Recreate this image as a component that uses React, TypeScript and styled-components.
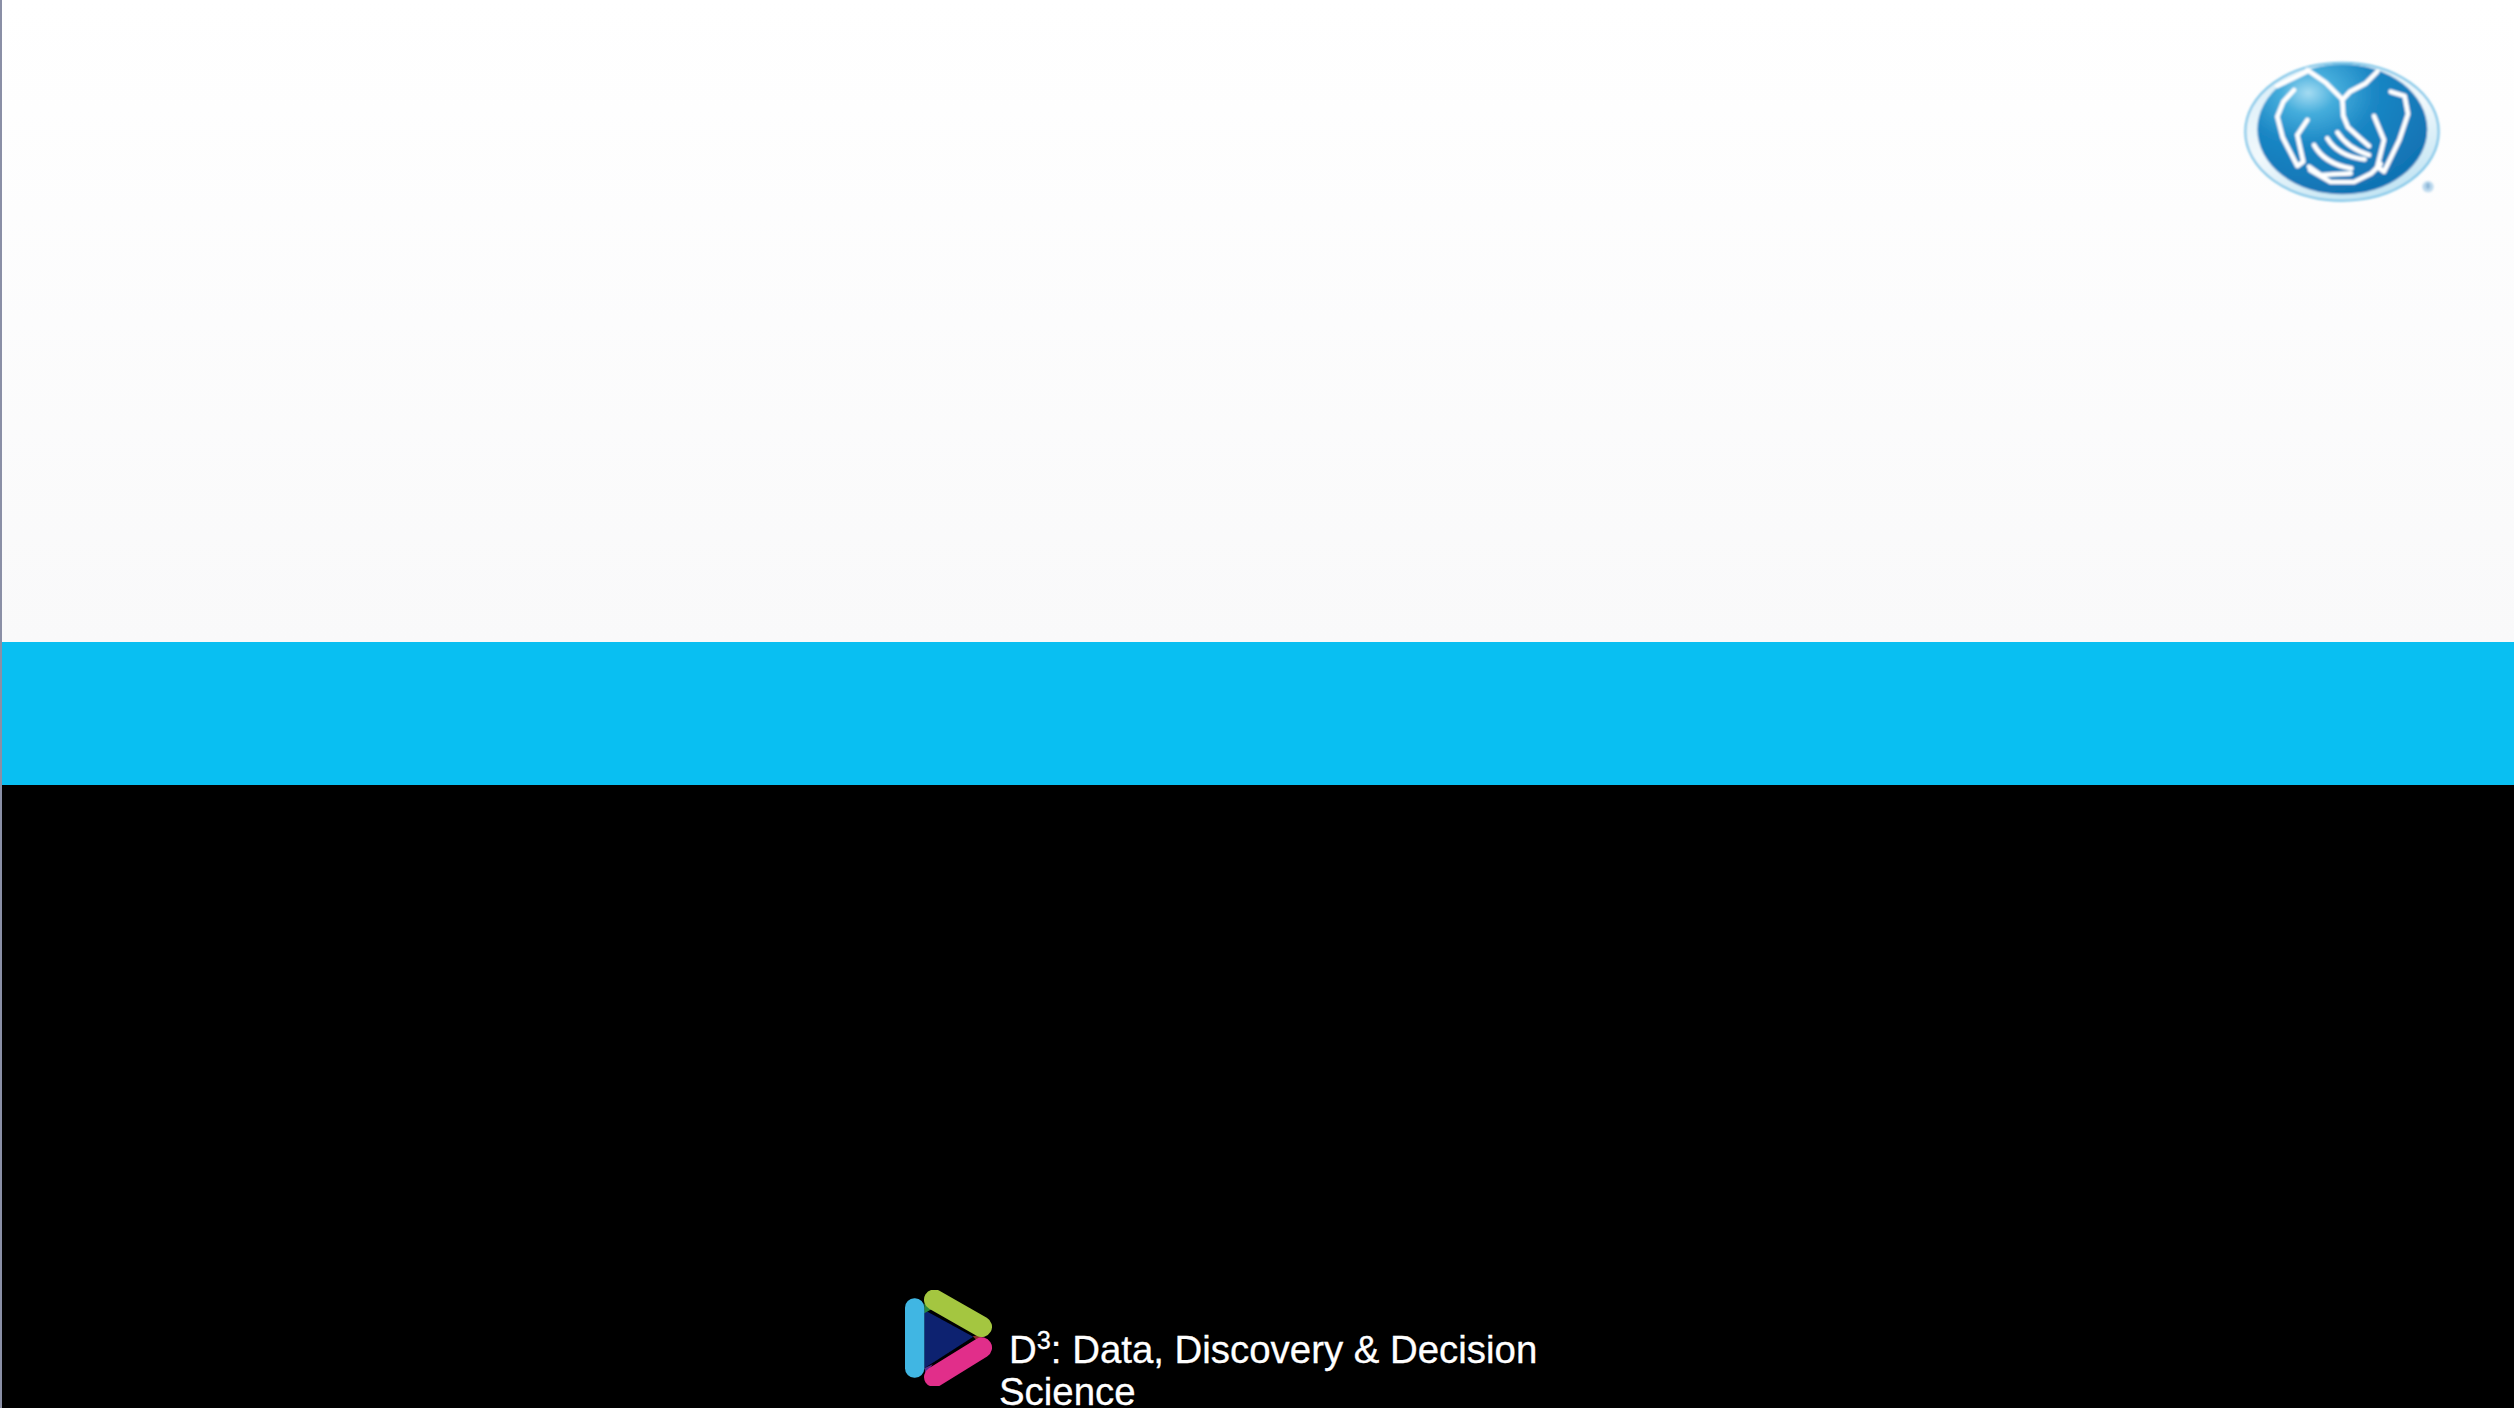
import styled, { createGlobalStyle } from 'styled-components';

const GlobalStyle = createGlobalStyle`
  html, body {
    margin: 0;
    padding: 0;
    background: #000;
  }
`;

const HandsLogo = () => (
  <SHandsSvg viewBox="0 0 780 540">
    <defs>
      <radialGradient id="globe" cx="0.3" cy="0.22" r="0.8">
        <stop offset="0" stopColor="#a5dcf2" />
        <stop offset="0.2" stopColor="#45addc" />
        <stop offset="0.5" stopColor="#1a86c4" />
        <stop offset="1" stopColor="#1173b4" />
      </radialGradient>
      <linearGradient id="ring" x1="0.2" y1="0" x2="0.7" y2="1">
        <stop offset="0" stopColor="#d8eef8" />
        <stop offset="0.5" stopColor="#f2f9fc" />
        <stop offset="1" stopColor="#bfe3f3" />
      </linearGradient>
      <filter id="soft">
        <feGaussianBlur stdDeviation="2.5" />
      </filter>
    </defs>
    <g filter="url(#soft)">
      <ellipse cx="384" cy="275" rx="290" ry="207" fill="url(#ring)" stroke="#6fc0e6" strokeWidth="6" />
      <ellipse cx="385" cy="268" rx="255" ry="195" fill="url(#globe)" />
      <g fill="none" stroke="#ffffff" strokeWidth="14" strokeLinecap="round" strokeLinejoin="round">
        <path d="M190 138 L278 95 M280 90 L335 128 L385 178 L388 228 L402 262 L440 296 L465 318" />
        <path d="M490 95 L455 130 L408 155 L385 180" />
        <path d="M240 150 L208 185 L190 230 L206 292 L250 378 L268 365 L250 285 L280 240" />
        <path d="M530 155 L572 168 L582 222 L556 300 L510 395 L490 380 L510 300 L480 228" />
        <path d="M300 315 Q332 372 412 385" />
        <path d="M340 295 Q372 348 452 358" />
        <path d="M370 277 Q402 326 465 345" />
        <path d="M285 380 L320 405 L410 400" />
        <path d="M288 390 L350 426 L420 426 L472 400 L500 372" />
      </g>
      <circle cx="642" cy="440" r="17" fill="#bcd9ee" />
      <text x="642" y="447" fontSize="20" fontFamily="Liberation Sans, sans-serif" textAnchor="middle" fill="#3f7fb5">®</text>
    </g>
  </SHandsSvg>
);

const PlayLogo = () => (
  <SPlaySvg viewBox="0 0 360 360">
    <defs>
      <filter id="soften">
        <feGaussianBlur stdDeviation="1.5" />
      </filter>
    </defs>
    <g filter="url(#soften)">
      <path d="M103 105 L250 185 L103 280 Z" fill="#0a2070" />
      <path d="M103 85 L130 100 L103 115 Z" fill="#2c8a3c" />
      <path d="M248 184 L280 178 L266 202 Z" fill="#8c2f2a" />
      <path d="M103 280 L128 268 L108 298 Z" fill="#5a2a8a" />
      <line x1="133" y1="74" x2="275" y2="155" stroke="#a4c63f" strokeWidth="62" strokeLinecap="round" />
      <line x1="275" y1="218" x2="133" y2="306" stroke="#e12d8a" strokeWidth="62" strokeLinecap="round" />
      <rect x="45" y="70" width="58" height="238" rx="28" fill="#3fb6e3" />
    </g>
  </SPlaySvg>
);

export default function App() {
  return (
    <SPage>
      <GlobalStyle />
      <SHero>
        <HandsLogo />
      </SHero>
      <SBand />
      <SFooter>
        <PlayLogo />
        <STitle>
          D<sup>3</sup>: Data, Discovery &amp; Decision Science
        </STitle>
      </SFooter>
    </SPage>
  );
}

const SPage = styled.div`
  display: flex;
  flex-direction: column;
  width: 2514px;
  height: 1408px;
  overflow: hidden;
  box-sizing: border-box;
  border-left: 2px solid #8a8fa6;
  background: #000;
`;

const SHero = styled.header`
  display: flex;
  justify-content: flex-end;
  align-items: flex-start;
  box-sizing: border-box;
  height: 642px;
  padding: 40px 40px 0 0;
  background: linear-gradient(#ffffff, #f9f9fa);
`;

const SHandsSvg = styled.svg`
  display: block;
  width: 260px;
  height: 180px;
`;

const SBand = styled.div`
  height: 143px;
  background: #09bff2;
`;

const SFooter = styled.footer`
  display: flex;
  align-items: flex-start;
  flex: 1;
  min-height: 0;
  padding: 490px 0 0 888px;
  background: #000;
`;

const SPlaySvg = styled.svg`
  display: block;
  flex: none;
  width: 120px;
  height: 120px;
`;

const STitle = styled.h1`
  width: 560px;
  margin: 54px 0 0 -11px;
  color: #fff;
  font-family: 'Liberation Sans', Arial, sans-serif;
  font-size: 38.4px;
  font-weight: 400;
  line-height: 42px;
  text-indent: 10px;
  -webkit-text-stroke: 0.3px #fff;
  sup {
    font-size: 66%;
    line-height: 0;
    vertical-align: 14px;
  }
`;
